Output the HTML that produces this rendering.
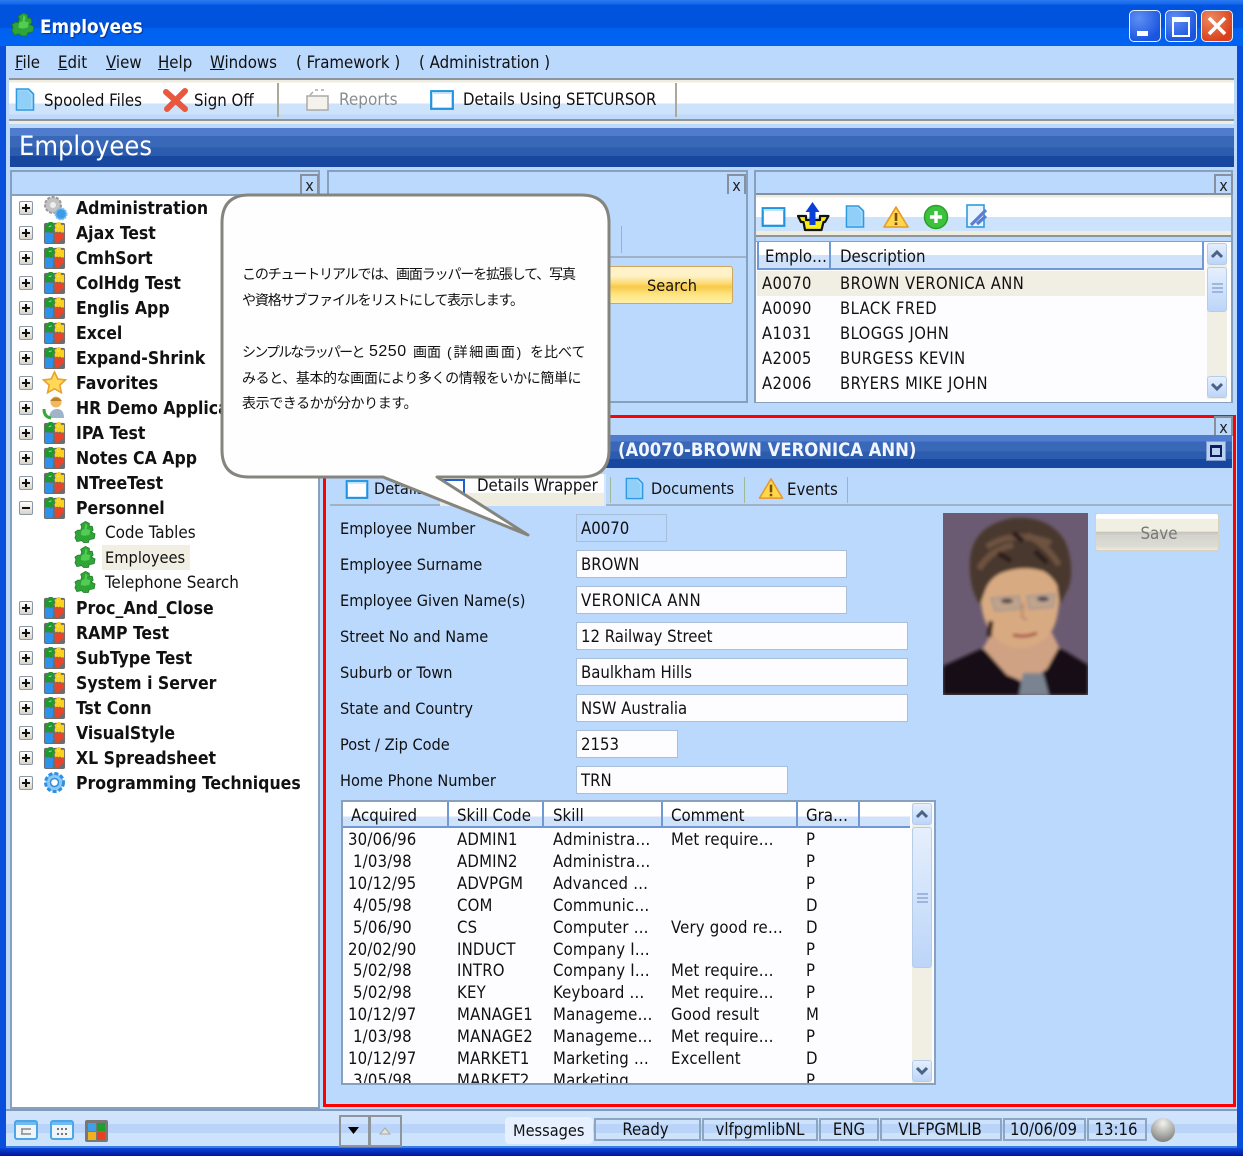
<!DOCTYPE html>
<html><head><meta charset="utf-8">
<style>
html,body{margin:0;padding:0}
body{width:1243px;height:1156px;position:relative;overflow:hidden;background:#bbd8fd;font:16.2px "DejaVu Sans Condensed","DejaVu Sans",sans-serif;color:#111;filter:blur(.3px)}
.a,.t,.b{position:absolute}
.t,.b{white-space:nowrap;line-height:24px;height:24px}
.b{font-weight:bold;font-size:17.5px;color:#111}
.m{font-size:16.7px}
.u{font-size:16.4px;letter-spacing:.45px}
.g{letter-spacing:.18px}
.hdr{background:linear-gradient(#4f7ccc 0,#4f7ccc 20%,#3a68b9 20%,#3a68b9 50%,#2c5cad 50%,#2c5cad 72%,#17479e 72%,#17479e 100%)}
.x{position:absolute;width:15px;height:18px;border:2px solid #87909c;border-bottom:0;text-align:center;font-size:16px;line-height:20px;color:#222}
.pm{position:absolute;left:19px;width:12px;height:12px;border:1px solid #8b97a5;background:linear-gradient(#fff,#d9d5c8);border-radius:2px}
.pm:before{content:"";position:absolute;left:2px;top:5px;width:8px;height:2px;background:#111}
.pm.p:after{content:"";position:absolute;left:5px;top:2px;width:2px;height:8px;background:#111}
.in{position:absolute;left:576px;height:26px;background:#fdfdff;border:1px solid #a9bfd9;line-height:28px;padding-left:4px;box-sizing:content-box;white-space:nowrap;font-size:16.6px}
.sc{position:absolute;width:20px;background:#f1efe4}
.sb{position:absolute;left:0;width:20px;height:22px;border:1px solid #b6cdea;border-radius:3px;background:linear-gradient(#e5effd,#bcd5f8);box-sizing:border-box}
.c{position:absolute;top:1118px;height:23px;border:2px solid #8ba6c2;box-sizing:border-box;text-align:center;line-height:21px;white-space:nowrap;font-size:16.6px}
.hc{position:absolute;border-right:2px solid #6f98d6;height:100%;top:0}
</style></head><body>
<svg width="0" height="0" style="position:absolute">
<defs>
<symbol id="pz" viewBox="0 0 24 26">
<rect x="1" y="3" width="22" height="22" rx="2" fill="#6d6d6d"/>
<path d="M2 5h3l1-3 4 0 1 3h1v3l-2 1 1 3h-1l-1 1-2-1-5 1z" fill="#1c9a2c"/>
<path d="M12 5l2-1 1-2 3 0 1 3h3v8h-3l-1-1-2 1-1-1-2 1-1-3 1-2z" fill="#fbd21f"/>
<path d="M2 13h5l1 1 2-1 1 3-1 1 1 3-1 1v3H3l-1-1z" fill="#2b93ec"/>
<path d="M12 14l2-1 2 1 2-1 4 1v5l-3 1-2 3-2 1-2-1-1-6z" fill="#e8452a"/>
<path d="M6 7l3-1M15 6l2 1" stroke="#dff6d8" stroke-width="1" opacity=".7"/>
</symbol>
<symbol id="gp" viewBox="0 0 24 24">
<path d="M12 1l4 2 0 3 3 0 1 4-2 2 4 2-1 5-5 1-1 3-5 0-2-2-5 1-2-4 1-3-1-3 3-2 3 0 1-3-1-3z" fill="#2fa537" stroke="#1e7a27" stroke-width=".8"/>
<path d="M12 3l2 2-1 4 4 1-1 5-5 1-4-1 1-5 3-1z" fill="#52cc52"/>
</symbol>
<symbol id="doc" viewBox="0 0 20 24">
<path d="M1.500 1.500h12l5 5v16h-17z" fill="#a8dbfb" stroke="#2f9ae0" stroke-width="1.6"/>
<path d="M3 3h9l4 5v13H3z" fill="#7ec6f6" opacity=".6"/>
</symbol>
<symbol id="win" viewBox="0 0 24 20">
<rect x="1.200" y="1.200" width="21.600" height="17.600" fill="#fdfdff" stroke="#1f93e0" stroke-width="2.200"/>
<rect x="2" y="2" width="20" height="2" fill="#bfe3fb"/>
</symbol>
<symbol id="warn" viewBox="0 0 26 24">
<path d="M13 2L25 22H1z" fill="#ffd84a" stroke="#e6972a" stroke-width="1.600" stroke-linejoin="round"/>
<rect x="11.700" y="8" width="2.600" height="8" fill="#7a4a10"/><rect x="11.700" y="17.500" width="2.600" height="2.600" fill="#7a4a10"/>
</symbol>
</defs>
</svg>

<!-- window frame -->
<div class="a" style="left:0;top:0;width:1243px;height:1156px;background:#0a4fdc"></div>
<div class="a" style="left:0;top:0;width:1243px;height:46px;background:linear-gradient(#2b7bf0 0,#1567ec 8%,#0053dd 12%,#0053dd 60%,#0062f0 62%,#0062f0 100%)"></div>
<div class="a" style="left:0;top:1148px;width:1243px;height:8px;background:linear-gradient(#0a46d6,#03149c)"></div>
<div class="a" style="left:6px;top:46px;width:1231px;height:1102px;background:#bbd8fd"></div>
<svg class="a" style="left:11px;top:12px" width="25" height="25"><use href="#gp" width="25" height="25"/></svg>
<div class="b" style="left:40px;top:16px;font-size:18.8px;color:#fff;text-shadow:1px 1px 1px #0a2f90">Employees</div>
<!-- window buttons -->
<div class="a" style="left:1129px;top:10px;width:30px;height:30px;border:1.500px solid #e8f0ff;border-radius:5px;background:radial-gradient(circle at 30% 25%,#5f8ff2,#1a55e0 75%)"><div class="a" style="left:7px;top:20px;width:11px;height:5px;background:#fff"></div></div>
<div class="a" style="left:1165px;top:10px;width:30px;height:30px;border:1.500px solid #e8f0ff;border-radius:5px;background:radial-gradient(circle at 30% 25%,#5f8ff2,#1a55e0 75%)"><div class="a" style="left:6px;top:6px;width:14px;height:13px;border:2px solid #fff;border-top-width:5px"></div></div>
<div class="a" style="left:1201px;top:10px;width:30px;height:30px;border:1.500px solid #e8f0ff;border-radius:5px;background:radial-gradient(circle at 30% 25%,#ec8a62,#d8401c 75%)"><svg width="30" height="30"><path d="M7 7L23 23M23 7L7 23" stroke="#fff" stroke-width="3.600"/></svg></div>

<!-- menu -->
<div class="t m" style="left:15px;top:50px"><u>F</u>ile</div>
<div class="t m" style="left:58px;top:50px"><u>E</u>dit</div>
<div class="t m" style="left:106px;top:50px"><u>V</u>iew</div>
<div class="t m" style="left:158px;top:50px"><u>H</u>elp</div>
<div class="t m" style="left:210px;top:50px"><u>W</u>indows</div>
<div class="t m" style="left:296px;top:50px">( Framework )</div>
<div class="t m" style="left:419px;top:50px">( Administration )</div>

<!-- toolbar -->
<div class="a" style="left:9px;top:78px;width:1225px;height:43px;box-sizing:border-box;border-top:2px solid #8f959c;border-bottom:2px solid #8f959c;background:linear-gradient(#efece0 0,#efece0 2px,#fff 3px,#fff 60%,#cde2fb 60%,#cde2fb 88%,#bfd9fa 88%)"></div>
<div class="a" style="left:9px;top:121px;width:1225px;height:3px;background:#efece0"></div>
<svg class="a" style="left:15px;top:87px" width="20" height="25"><use href="#doc" width="20" height="25"/></svg>
<div class="t m" style="left:44px;top:88px">Spooled Files</div>
<svg class="a" style="left:163px;top:87px" width="25" height="25"><path d="M3 5L22 22M22 4L4 22" stroke="#e8583e" stroke-width="6" stroke-linecap="round"/></svg>
<div class="t m" style="left:194px;top:88px">Sign Off</div>
<div class="a" style="left:277px;top:83px;width:2px;height:34px;background:#a9a99c"></div>
<svg class="a" style="left:305px;top:87px" width="26" height="25"><path d="M2 9h21v14H2zM5 8l3-3M10 3h3M16 3h3" fill="#f4f2ea" stroke="#aaa" stroke-width="1.500"/></svg>
<div class="t m" style="left:339px;top:88px;color:#8a8d90;font-size:17px">Reports</div>
<svg class="a" style="left:430px;top:90px" width="24" height="20"><use href="#win" width="24" height="20"/></svg>
<div class="t" style="left:463px;top:88px;font-size:16.6px">Details Using SETCURSOR</div>
<div class="a" style="left:675px;top:83px;width:2px;height:34px;background:#a9a99c"></div>

<!-- header -->
<div class="a hdr" style="left:10px;top:128px;width:1224px;height:39px"></div>
<div class="t" style="left:19px;top:133px;font-size:27px;line-height:27px;height:27px;color:#fff">Employees</div>

<!-- left panel -->
<div class="a" style="left:10px;top:170px;width:310px;height:939px;box-sizing:border-box;border:2px solid #87a0bd;background:#fff"></div>
<div class="a" style="left:12px;top:172px;width:306px;height:22px;background:#bbd8fd;border-bottom:2px solid #87a0bd"></div>
<div class="x" style="left:300px;top:174px">x</div>

<div class="pm p" style="top:201px"></div><div class="pm p" style="top:226px"></div><div class="pm p" style="top:251px"></div><div class="pm p" style="top:276px"></div><div class="pm p" style="top:301px"></div><div class="pm p" style="top:326px"></div><div class="pm p" style="top:351px"></div><div class="pm p" style="top:376px"></div><div class="pm p" style="top:401px"></div><div class="pm p" style="top:426px"></div><div class="pm p" style="top:451px"></div><div class="pm p" style="top:476px"></div><div class="pm" style="top:501px"></div><div class="pm p" style="top:601px"></div><div class="pm p" style="top:626px"></div><div class="pm p" style="top:651px"></div><div class="pm p" style="top:676px"></div><div class="pm p" style="top:701px"></div><div class="pm p" style="top:726px"></div><div class="pm p" style="top:751px"></div><div class="pm p" style="top:776px"></div>

<svg class="a" style="left:42px;top:195px" width="26" height="26"><circle cx="11" cy="10" r="8" fill="#c3c3c3" stroke="#9a9a9a" stroke-width="2" stroke-dasharray="3 1.500"/><circle cx="11" cy="10" r="3" fill="#eee"/><circle cx="19" cy="19" r="5.500" fill="#3d9be8" stroke="#7cc0f2" stroke-width="2" stroke-dasharray="2 1"/></svg>
<svg class="a" style="left:43px;top:220px" width="23" height="25"><use href="#pz" width="23" height="25"/></svg>
<svg class="a" style="left:43px;top:245px" width="23" height="25"><use href="#pz" width="23" height="25"/></svg>
<svg class="a" style="left:43px;top:270px" width="23" height="25"><use href="#pz" width="23" height="25"/></svg>
<svg class="a" style="left:43px;top:295px" width="23" height="25"><use href="#pz" width="23" height="25"/></svg>
<svg class="a" style="left:43px;top:320px" width="23" height="25"><use href="#pz" width="23" height="25"/></svg>
<svg class="a" style="left:43px;top:345px" width="23" height="25"><use href="#pz" width="23" height="25"/></svg>
<svg class="a" style="left:42px;top:370px" width="25" height="25"><path d="M12.500 2l3.300 7 7.700.9-5.700 5.200 1.600 7.600-6.900-3.900-6.900 3.900 1.600-7.600L1.500 9.900 9.200 9z" fill="#ffd858" stroke="#e8a22c" stroke-width="1.600"/></svg>
<svg class="a" style="left:42px;top:395px" width="25" height="25"><circle cx="14" cy="7" r="5.500" fill="#f0b860"/><path d="M8 6q6-7 12 0z" fill="#b88020"/><path d="M7 23q1-9 8-9t7 9z" fill="#9fb4c8"/><path d="M2 14q0 8 7 9" fill="none" stroke="#35a83a" stroke-width="3"/></svg>
<svg class="a" style="left:43px;top:420px" width="23" height="25"><use href="#pz" width="23" height="25"/></svg>
<svg class="a" style="left:43px;top:445px" width="23" height="25"><use href="#pz" width="23" height="25"/></svg>
<svg class="a" style="left:43px;top:470px" width="23" height="25"><use href="#pz" width="23" height="25"/></svg>
<svg class="a" style="left:43px;top:495px" width="23" height="25"><use href="#pz" width="23" height="25"/></svg>
<svg class="a" style="left:74px;top:520px" width="23" height="24"><use href="#gp" width="23" height="24"/></svg>
<div class="a" style="left:102px;top:545px;width:88px;height:25px;background:#f1efe4"></div>
<svg class="a" style="left:74px;top:545px" width="23" height="24"><use href="#gp" width="23" height="24"/></svg>
<svg class="a" style="left:74px;top:570px" width="23" height="24"><use href="#gp" width="23" height="24"/></svg>
<svg class="a" style="left:43px;top:595px" width="23" height="25"><use href="#pz" width="23" height="25"/></svg>
<svg class="a" style="left:43px;top:620px" width="23" height="25"><use href="#pz" width="23" height="25"/></svg>
<svg class="a" style="left:43px;top:645px" width="23" height="25"><use href="#pz" width="23" height="25"/></svg>
<svg class="a" style="left:43px;top:670px" width="23" height="25"><use href="#pz" width="23" height="25"/></svg>
<svg class="a" style="left:43px;top:695px" width="23" height="25"><use href="#pz" width="23" height="25"/></svg>
<svg class="a" style="left:43px;top:720px" width="23" height="25"><use href="#pz" width="23" height="25"/></svg>
<svg class="a" style="left:43px;top:745px" width="23" height="25"><use href="#pz" width="23" height="25"/></svg>
<svg class="a" style="left:42px;top:770px" width="25" height="25"><circle cx="12.500" cy="12.500" r="9" fill="#8cc8f5" stroke="#2f8fe0" stroke-width="3" stroke-dasharray="4 2"/><circle cx="12.500" cy="12.500" r="4" fill="#fff" stroke="#2f8fe0" stroke-width="1.500"/></svg>

<div class="b" style="left:76px;top:197px">Administration</div>
<div class="b" style="left:76px;top:222px">Ajax Test</div>
<div class="b" style="left:76px;top:247px">CmhSort</div>
<div class="b" style="left:76px;top:272px">ColHdg Test</div>
<div class="b" style="left:76px;top:297px">Englis App</div>
<div class="b" style="left:76px;top:322px">Excel</div>
<div class="b" style="left:76px;top:347px">Expand-Shrink</div>
<div class="b" style="left:76px;top:372px">Favorites</div>
<div class="b" style="left:76px;top:397px">HR Demo Applica</div>
<div class="b" style="left:76px;top:422px">IPA Test</div>
<div class="b" style="left:76px;top:447px">Notes CA App</div>
<div class="b" style="left:76px;top:472px">NTreeTest</div>
<div class="b" style="left:76px;top:497px">Personnel</div>
<div class="t" style="left:105px;top:520px;font-size:16.900px">Code Tables</div>
<div class="t" style="left:105px;top:546px;font-size:16.300px">Employees</div>
<div class="t" style="left:105px;top:570px;font-size:16.900px">Telephone Search</div>
<div class="b" style="left:76px;top:597px">Proc_And_Close</div>
<div class="b" style="left:76px;top:622px">RAMP Test</div>
<div class="b" style="left:76px;top:647px">SubType Test</div>
<div class="b" style="left:76px;top:672px">System i Server</div>
<div class="b" style="left:76px;top:697px">Tst Conn</div>
<div class="b" style="left:76px;top:722px">VisualStyle</div>
<div class="b" style="left:76px;top:747px">XL Spreadsheet</div>
<div class="b" style="left:76px;top:772px">Programming Techniques</div>

<!-- middle panel -->
<div class="a" style="left:327px;top:170px;width:421px;height:233px;box-sizing:border-box;border:2px solid #87a0bd"></div>
<div class="x" style="left:727px;top:174px">x</div>
<div class="a" style="left:621px;top:226px;width:1px;height:27px;background:#9fb89a"></div>
<div class="a" style="left:329px;top:256px;width:417px;height:2px;background:#9fb2c8"></div>
<div class="a" style="left:600px;top:266px;width:133px;height:38px;box-sizing:border-box;border:1px solid #d2a65a;border-radius:3px;background:linear-gradient(#fff2c8 0,#fff2c8 25%,#fbdc74 45%,#f8c94a 55%,#fde47e 75%,#fff0a8 100%);text-align:center;line-height:38px;padding-left:11px">Search</div>

<!-- right panel -->
<div class="a" style="left:754px;top:170px;width:479px;height:233px;box-sizing:border-box;border:2px solid #87a0bd"></div>
<div class="x" style="left:1214px;top:174px">x</div>
<div class="a" style="left:756px;top:193px;width:475px;height:2px;background:#87909c"></div>
<div class="a" style="left:756px;top:195px;width:475px;height:42px;box-sizing:border-box;border-bottom:2px solid #8f959c;background:linear-gradient(#efece0 0,#efece0 2px,#fff 3px,#fff 55%,#cde2fb 55%,#cde2fb 90%,#efece0 90%)"></div>
<svg class="a" style="left:761px;top:207px" width="25" height="20"><use href="#win" width="25" height="20"/></svg>
<svg class="a" style="left:797px;top:201px" width="33" height="31"><path d="M1 15h8v4h7l7 0 0-4h8.500l-3.500 6h-1.500l-2 8H8l-1.500-8H4z" fill="#f7ee18" stroke="#111" stroke-width="2.200" stroke-linejoin="round"/><path d="M15.500 1l7 10h-4v13h-6V11h-4z" fill="#0b3fd8"/></svg>
<svg class="a" style="left:845px;top:204px" width="20" height="25"><use href="#doc" width="20" height="25"/></svg>
<svg class="a" style="left:883px;top:205px" width="26" height="24"><use href="#warn" width="26" height="24"/></svg>
<svg class="a" style="left:923px;top:204px" width="26" height="26"><circle cx="13" cy="13" r="11.500" fill="#3cc23c" stroke="#2aa02a" stroke-width="1.500"/><path d="M13 7v12M7 13h12" stroke="#fff" stroke-width="3.400"/></svg>
<svg class="a" style="left:966px;top:204px" width="24" height="25"><rect x="1" y="1" width="17" height="22" fill="#e8f4fe" stroke="#2f9ae0" stroke-width="1.600"/><path d="M5 21L20 6M11 20l9-8" stroke="#5a7fd0" stroke-width="3.200"/></svg>

<!-- right list -->
<div class="a" style="left:756px;top:241px;width:475px;height:160px;background:#fdfdff;border-top:1px solid #87a0bd"></div>
<div class="a" style="left:757px;top:242px;width:446px;height:28px;box-sizing:border-box;background:linear-gradient(#fff 0,#fff 50%,#cfe2fa 50%);border-bottom:2px solid #6f98d6"><div class="hc" style="left:72px"></div></div>
<div class="a" style="left:1202px;top:242px;width:2px;height:28px;background:#6f98d6"></div>
<div class="a" style="left:757px;top:242px;width:2px;height:28px;background:#6f98d6"></div>
<div class="t m" style="left:765px;top:244px">Emplo…</div>
<div class="t m" style="left:840px;top:244px">Description</div>
<div class="a" style="left:757px;top:271px;width:448px;height:25px;background:#f1efe4"></div>
<div class="t u" style="left:762px;top:272px">A0070</div><div class="t u" style="left:840px;top:272px">BROWN VERONICA ANN</div>
<div class="t u" style="left:762px;top:297px">A0090</div><div class="t u" style="left:840px;top:297px">BLACK FRED</div>
<div class="t u" style="left:762px;top:322px">A1031</div><div class="t u" style="left:840px;top:322px">BLOGGS JOHN</div>
<div class="t u" style="left:762px;top:347px">A2005</div><div class="t u" style="left:840px;top:347px">BURGESS KEVIN</div>
<div class="t u" style="left:762px;top:372px">A2006</div><div class="t u" style="left:840px;top:372px">BRYERS MIKE JOHN</div>
<div class="sc" style="left:1207px;top:243px;height:156px">
<div class="sb" style="top:0"></div>
<div class="sb" style="top:24px;height:45px"><svg style="position:absolute;left:4px;top:14px" width="11" height="14"><path d="M0 2h11M0 6h11M0 10h11" stroke="#8aa8d8" stroke-width="1.500"/></svg></div>
<div class="sb" style="top:133px"></div>
<svg style="position:absolute;left:3px;top:6px" width="14" height="10"><path d="M2 8l5-5 5 5" fill="none" stroke="#4a6285" stroke-width="3"/></svg>
<svg style="position:absolute;left:3px;top:139px" width="14" height="10"><path d="M2 2l5 5 5-5" fill="none" stroke="#4a6285" stroke-width="3"/></svg>
</div>

<!-- detail panel -->
<div class="a" style="left:323px;top:415px;width:913px;height:692px;box-sizing:border-box;border:3px solid #f00"></div>
<div class="x" style="left:1214px;top:416px">x</div>
<div class="a hdr" style="left:327px;top:435px;width:905px;height:33px"></div>
<div class="b" style="left:618px;top:439px;font-size:18.300px;color:#f2f6ff">(A0070-BROWN VERONICA ANN)</div>
<div class="a" style="left:1206px;top:441px;width:20px;height:20px;box-sizing:border-box;background:#b9d2f2;border:1px solid #7f9ccc;padding:3px"><div style="width:12px;height:12px;box-sizing:border-box;border:2px solid #0b1d5c;border-top-width:3px"></div></div>
<!-- tabs -->
<div class="a" style="left:330px;top:504px;width:902px;height:2px;background:#9fb2c8"></div>
<div class="a" style="left:440px;top:474px;width:164px;height:32px;background:linear-gradient(#fdfdff 0,#fdfdff 60%,#efece0 60%);border-right:2px solid #d8e6fa"></div>
<svg class="a" style="left:345px;top:480px" width="24" height="19"><use href="#win" width="24" height="19"/></svg>
<div class="t" style="left:374px;top:477px">Details</div>
<svg class="a" style="left:441px;top:479px" width="24" height="19"><rect x="1" y="1" width="22" height="17" fill="#fff" stroke="#1f5fd0" stroke-width="2"/></svg>
<div class="t m" style="left:477px;top:473px">Details Wrapper</div>
<div class="a" style="left:610px;top:477px;width:1px;height:26px;background:#9fb89a"></div>
<svg class="a" style="left:625px;top:477px" width="19" height="23"><use href="#doc" width="19" height="23"/></svg>
<div class="t" style="left:651px;top:477px">Documents</div>
<div class="a" style="left:744px;top:477px;width:1px;height:26px;background:#9fb89a"></div>
<svg class="a" style="left:758px;top:477px" width="26" height="23"><use href="#warn" width="26" height="23"/></svg>
<div class="t m" style="left:787px;top:477px">Events</div>
<div class="a" style="left:847px;top:477px;width:1px;height:26px;background:#9fb89a"></div>

<!-- form -->
<div class="t" style="left:340px;top:517px">Employee Number</div>
<div class="t" style="left:340px;top:553px">Employee Surname</div>
<div class="t" style="left:340px;top:589px">Employee Given Name(s)</div>
<div class="t" style="left:340px;top:625px">Street No and Name</div>
<div class="t" style="left:340px;top:661px">Suburb or Town</div>
<div class="t" style="left:340px;top:697px">State and Country</div>
<div class="t" style="left:340px;top:733px">Post / Zip Code</div>
<div class="t" style="left:340px;top:769px">Home Phone Number</div>
<div class="in" style="top:514px;width:85px;background:#bbd8fd">A0070</div>
<div class="in" style="top:550px;width:265px">BROWN</div>
<div class="in" style="top:586px;width:265px;letter-spacing:.4px">VERONICA ANN</div>
<div class="in" style="top:622px;width:326px">12 Railway Street</div>
<div class="in" style="top:658px;width:326px">Baulkham Hills</div>
<div class="in" style="top:694px;width:326px">NSW Australia</div>
<div class="in" style="top:730px;width:96px">2153</div>
<div class="in" style="top:766px;width:206px">TRN</div>

<!-- photo -->
<svg class="a" style="left:943px;top:513px" width="145" height="182" viewBox="0 0 145 182">
<defs><filter id="bl"><feGaussianBlur stdDeviation="1.600"/></filter><clipPath id="pc"><rect width="145" height="182"/></clipPath></defs>
<rect width="145" height="182" fill="#6b5b72"/>
<g clip-path="url(#pc)"><g filter="url(#bl)">
<path d="M0 153L38 136 44 138 80 172 112 134 122 138 145 152V182H0z" fill="#120e18"/>
<path d="M40 135L50 118 108 118 116 134 104 156 84 170 64 162z" fill="#d0a284"/>
<path d="M38 70Q36 100 46 116 58 135 78 135 98 134 110 116 118 98 116 68L100 50H58z" fill="#d8aa82"/>
<path d="M37 92Q25 74 27 46 30 12 70 5 106 2 122 28 132 52 126 74L117 92 114 72Q108 62 100 58 78 52 58 60 46 66 42 78z" fill="#4a382e"/>
<path d="M44 34Q70 16 108 30M36 56Q48 36 70 32M84 22Q104 32 116 52" stroke="#6e5240" stroke-width="6" fill="none"/>
<path d="M55 40L68 48M92 38L104 50M70 20L80 28" stroke="#2c1c1c" stroke-width="5" fill="none"/>
<path d="M48 85L76 83 78 96 52 98zM84 83L112 81 110 94 86 96z" fill="#c0a48c" stroke="#9a9290" stroke-width="1.300"/>
<ellipse cx="64" cy="88" rx="6" ry="2.500" fill="#544"/><ellipse cx="100" cy="86" rx="6" ry="2.500" fill="#445"/>
<path d="M80 90l-1 14 5 3" stroke="#bc8e6c" stroke-width="2.500" fill="none"/>
<path d="M70 122q12 3 24-2" stroke="#a8504a" stroke-width="3" fill="none"/>
<path d="M80 160h20l6 22H76z" fill="#7a8490"/>
<path d="M48 108L46 124" stroke="#3a2820" stroke-width="5"/>
</g></g></svg>
<div class="a" style="left:1095px;top:513px;width:124px;height:38px;box-sizing:border-box;border:1px solid #d6d2bc;border-radius:3px;background:linear-gradient(#fff 0,#fff 12%,#f1efe2 14%,#f1efe2 48%,#c4c4bc 50%,#d4d4ce 60%,#dcdcd4 90%,#efece0 100%);text-align:center;line-height:39px;color:#777;padding-left:4px;font-size:16.800px">Save</div>

<!-- grid -->
<div class="a" style="left:341px;top:800px;width:595px;height:285px;box-sizing:border-box;border:2px solid #87a0bd;background:#fdfdff;overflow:hidden"></div>
<div class="a" style="left:343px;top:802px;width:567px;height:26px;box-sizing:border-box;background:linear-gradient(#fff 0,#fff 60%,#cfe2fa 60%);border-bottom:2px solid #6f98d6">
<div class="hc" style="left:104px"></div><div class="hc" style="left:199px"></div><div class="hc" style="left:318px"></div><div class="hc" style="left:453px"></div><div class="hc" style="left:515px"></div></div>
<div class="t m" style="left:351px;top:803px">Acquired</div>
<div class="t m" style="left:457px;top:803px">Skill Code</div>
<div class="t m" style="left:553px;top:803px">Skill</div>
<div class="t m" style="left:671px;top:803px">Comment</div>
<div class="t m" style="left:806px;top:803px">Gra…</div>
<div class="a g" style="left:343px;top:830px;width:567px;height:253px;overflow:hidden;font-size:16.600px">
<div class="t" style="left:5px;top:-2px">30/06/96</div><div class="t" style="left:114px;top:-2px">ADMIN1</div><div class="t" style="left:210px;top:-2px">Administra…</div><div class="t" style="left:328px;top:-2px">Met require…</div><div class="t" style="left:463px;top:-2px">P</div>
<div class="t" style="left:10px;top:20px">1/03/98</div><div class="t" style="left:114px;top:20px">ADMIN2</div><div class="t" style="left:210px;top:20px">Administra…</div><div class="t" style="left:463px;top:20px">P</div>
<div class="t" style="left:5px;top:42px">10/12/95</div><div class="t" style="left:114px;top:42px">ADVPGM</div><div class="t" style="left:210px;top:42px">Advanced …</div><div class="t" style="left:463px;top:42px">P</div>
<div class="t" style="left:10px;top:64px">4/05/98</div><div class="t" style="left:114px;top:64px">COM</div><div class="t" style="left:210px;top:64px">Communic…</div><div class="t" style="left:463px;top:64px">D</div>
<div class="t" style="left:10px;top:86px">5/06/90</div><div class="t" style="left:114px;top:86px">CS</div><div class="t" style="left:210px;top:86px">Computer …</div><div class="t" style="left:328px;top:86px">Very good re…</div><div class="t" style="left:463px;top:86px">D</div>
<div class="t" style="left:5px;top:108px">20/02/90</div><div class="t" style="left:114px;top:108px">INDUCT</div><div class="t" style="left:210px;top:108px">Company I…</div><div class="t" style="left:463px;top:108px">P</div>
<div class="t" style="left:10px;top:129px">5/02/98</div><div class="t" style="left:114px;top:129px">INTRO</div><div class="t" style="left:210px;top:129px">Company I…</div><div class="t" style="left:328px;top:129px">Met require…</div><div class="t" style="left:463px;top:129px">P</div>
<div class="t" style="left:10px;top:151px">5/02/98</div><div class="t" style="left:114px;top:151px">KEY</div><div class="t" style="left:210px;top:151px">Keyboard …</div><div class="t" style="left:328px;top:151px">Met require…</div><div class="t" style="left:463px;top:151px">P</div>
<div class="t" style="left:5px;top:173px">10/12/97</div><div class="t" style="left:114px;top:173px">MANAGE1</div><div class="t" style="left:210px;top:173px">Manageme…</div><div class="t" style="left:328px;top:173px">Good result</div><div class="t" style="left:463px;top:173px">M</div>
<div class="t" style="left:10px;top:195px">1/03/98</div><div class="t" style="left:114px;top:195px">MANAGE2</div><div class="t" style="left:210px;top:195px">Manageme…</div><div class="t" style="left:328px;top:195px">Met require…</div><div class="t" style="left:463px;top:195px">P</div>
<div class="t" style="left:5px;top:217px">10/12/97</div><div class="t" style="left:114px;top:217px">MARKET1</div><div class="t" style="left:210px;top:217px">Marketing …</div><div class="t" style="left:328px;top:217px">Excellent</div><div class="t" style="left:463px;top:217px">D</div>
<div class="t" style="left:10px;top:239px">3/05/98</div><div class="t" style="left:114px;top:239px">MARKET2</div><div class="t" style="left:210px;top:239px">Marketing …</div><div class="t" style="left:463px;top:239px">P</div>
</div>
<div class="sc" style="left:912px;top:803px;height:280px">
<div class="sb" style="top:0"></div>
<div class="sb" style="top:24px;height:141px"><svg style="position:absolute;left:4px;top:64px" width="11" height="14"><path d="M0 2h11M0 6h11M0 10h11" stroke="#8aa8d8" stroke-width="1.500"/></svg></div>
<div class="sb" style="top:257px"></div>
<svg style="position:absolute;left:3px;top:6px" width="14" height="10"><path d="M2 8l5-5 5 5" fill="none" stroke="#4a6285" stroke-width="3"/></svg>
<svg style="position:absolute;left:3px;top:263px" width="14" height="10"><path d="M2 2l5 5 5-5" fill="none" stroke="#4a6285" stroke-width="3"/></svg>
</div>

<!-- callout -->
<svg class="a" style="left:215px;top:188px" width="400" height="355" viewBox="215 188 400 355">
<path d="M249 195H581Q609 195 609 223V450Q609 477 581 477H437L528 535L383 477H249Q222 477 222 450V223Q222 195 249 195Z" fill="#fefefe" stroke="#85857d" stroke-width="3" stroke-linejoin="round"/>
</svg>
<div style="position:absolute;left:242px;top:262px;font:14px/24px 'Liberation Sans','Noto Sans CJK JP',sans-serif;color:#111;white-space:nowrap">
<div style="position:absolute;top:0;letter-spacing:-1.150px">このチュートリアルでは、画面ラッパーを拡張して、写真</div>
<div style="position:absolute;top:26px;letter-spacing:-1.150px">や資格サブファイルをリストにして表示します。</div>
<div style="position:absolute;top:78px;letter-spacing:-1.800px">シンプルなラッパーと</div>
<div style="position:absolute;left:127px;top:78px;font-size:16px;letter-spacing:.5px">5250</div>
<div style="position:absolute;left:171px;top:78px">画面</div>
<div style="position:absolute;left:205px;top:78px;letter-spacing:1.800px">(詳細画面)</div>
<div style="position:absolute;left:288px;top:78px">を比べて</div>
<div style="position:absolute;top:104px;letter-spacing:-.4px">みると、基本的な画面により多くの情報をいかに簡単に</div>
<div style="position:absolute;top:129px;letter-spacing:-.4px">表示できるかが分かります。</div>
</div>

<!-- status bar -->
<div class="a" style="left:6px;top:1109px;width:1231px;height:39px;border-top:2px solid #7f9cc0;box-sizing:border-box;background:linear-gradient(#d2e4fc 0,#cde2fb 35%,#b9d4f8 35%,#b9d4f8 60%,#cde2fb 60%,#cde2fb 100%)"></div>
<div class="a" style="left:6px;top:1146px;width:1231px;height:2px;background:#3a7ee6"></div>
<svg class="a" style="left:14px;top:1120px" width="24" height="20"><rect x="1" y="1" width="22" height="18" rx="2" fill="#eef4f8" stroke="#4aa6e8" stroke-width="2"/><rect x="2" y="2" width="20" height="3" fill="#6fbaf0"/><path d="M7 9h10M7 14h10M8 9v5" stroke="#888" stroke-width="1.400"/></svg>
<svg class="a" style="left:50px;top:1120px" width="24" height="20"><rect x="1" y="1" width="22" height="18" rx="2" fill="#eef4f8" stroke="#4aa6e8" stroke-width="2"/><rect x="2" y="2" width="20" height="3" fill="#6fbaf0"/><path d="M7 9h2M11 9h2M15 9h2M7 14h2M11 14h2M15 14h2" stroke="#777" stroke-width="2"/></svg>
<svg class="a" style="left:85px;top:1120px" width="23" height="22"><rect width="23" height="22" rx="2" fill="#777"/><rect x="3" y="3" width="8" height="8" fill="#3da0e8"/><rect x="12" y="3" width="8" height="8" fill="#1fa02a"/><rect x="3" y="12" width="8" height="8" fill="#f0b020"/><rect x="12" y="12" width="8" height="8" fill="#e84020"/></svg>
<div class="a" style="left:339px;top:1115px;width:31px;height:32px;box-sizing:border-box;border:2px solid #8f959c"><svg style="position:absolute;left:6px;top:9px" width="14" height="9"><path d="M1 1h11L6.500 8z" fill="#000"/></svg></div>
<div class="a" style="left:369px;top:1115px;width:33px;height:32px;box-sizing:border-box;border:2px solid #8f959c"><svg style="position:absolute;left:8px;top:10px" width="14" height="9"><path d="M1 7h10L6 1z" fill="#e6e3d6" stroke="#aaa"/></svg></div>
<div class="a" style="left:505px;top:1117px;width:88px;height:27px;background:#e6f0fe;border-radius:4px"></div>
<div class="t" style="left:513px;top:1119px">Messages</div>
<div class="c" style="left:594px;width:107px;padding-right:4px;line-height:19px">Ready</div>
<div class="c" style="left:702px;width:116px;line-height:19px">vlfpgmlibNL</div>
<div class="c" style="left:819px;width:60px;line-height:19px">ENG</div>
<div class="c" style="left:880px;width:122px;line-height:19px;padding-right:2px">VLFPGMLIB</div>
<div class="c" style="left:1003px;width:83px;line-height:19px;padding-right:2px">10/06/09</div>
<div class="c" style="left:1087px;width:60px;line-height:19px;padding-right:2px">13:16</div>
<div class="a" style="left:1151px;top:1118px;width:24px;height:24px;border-radius:50%;background:radial-gradient(circle at 50% 22%,#f2f2ee,#a8a8a4 55%,#6a6a68)"></div>
</body></html>
